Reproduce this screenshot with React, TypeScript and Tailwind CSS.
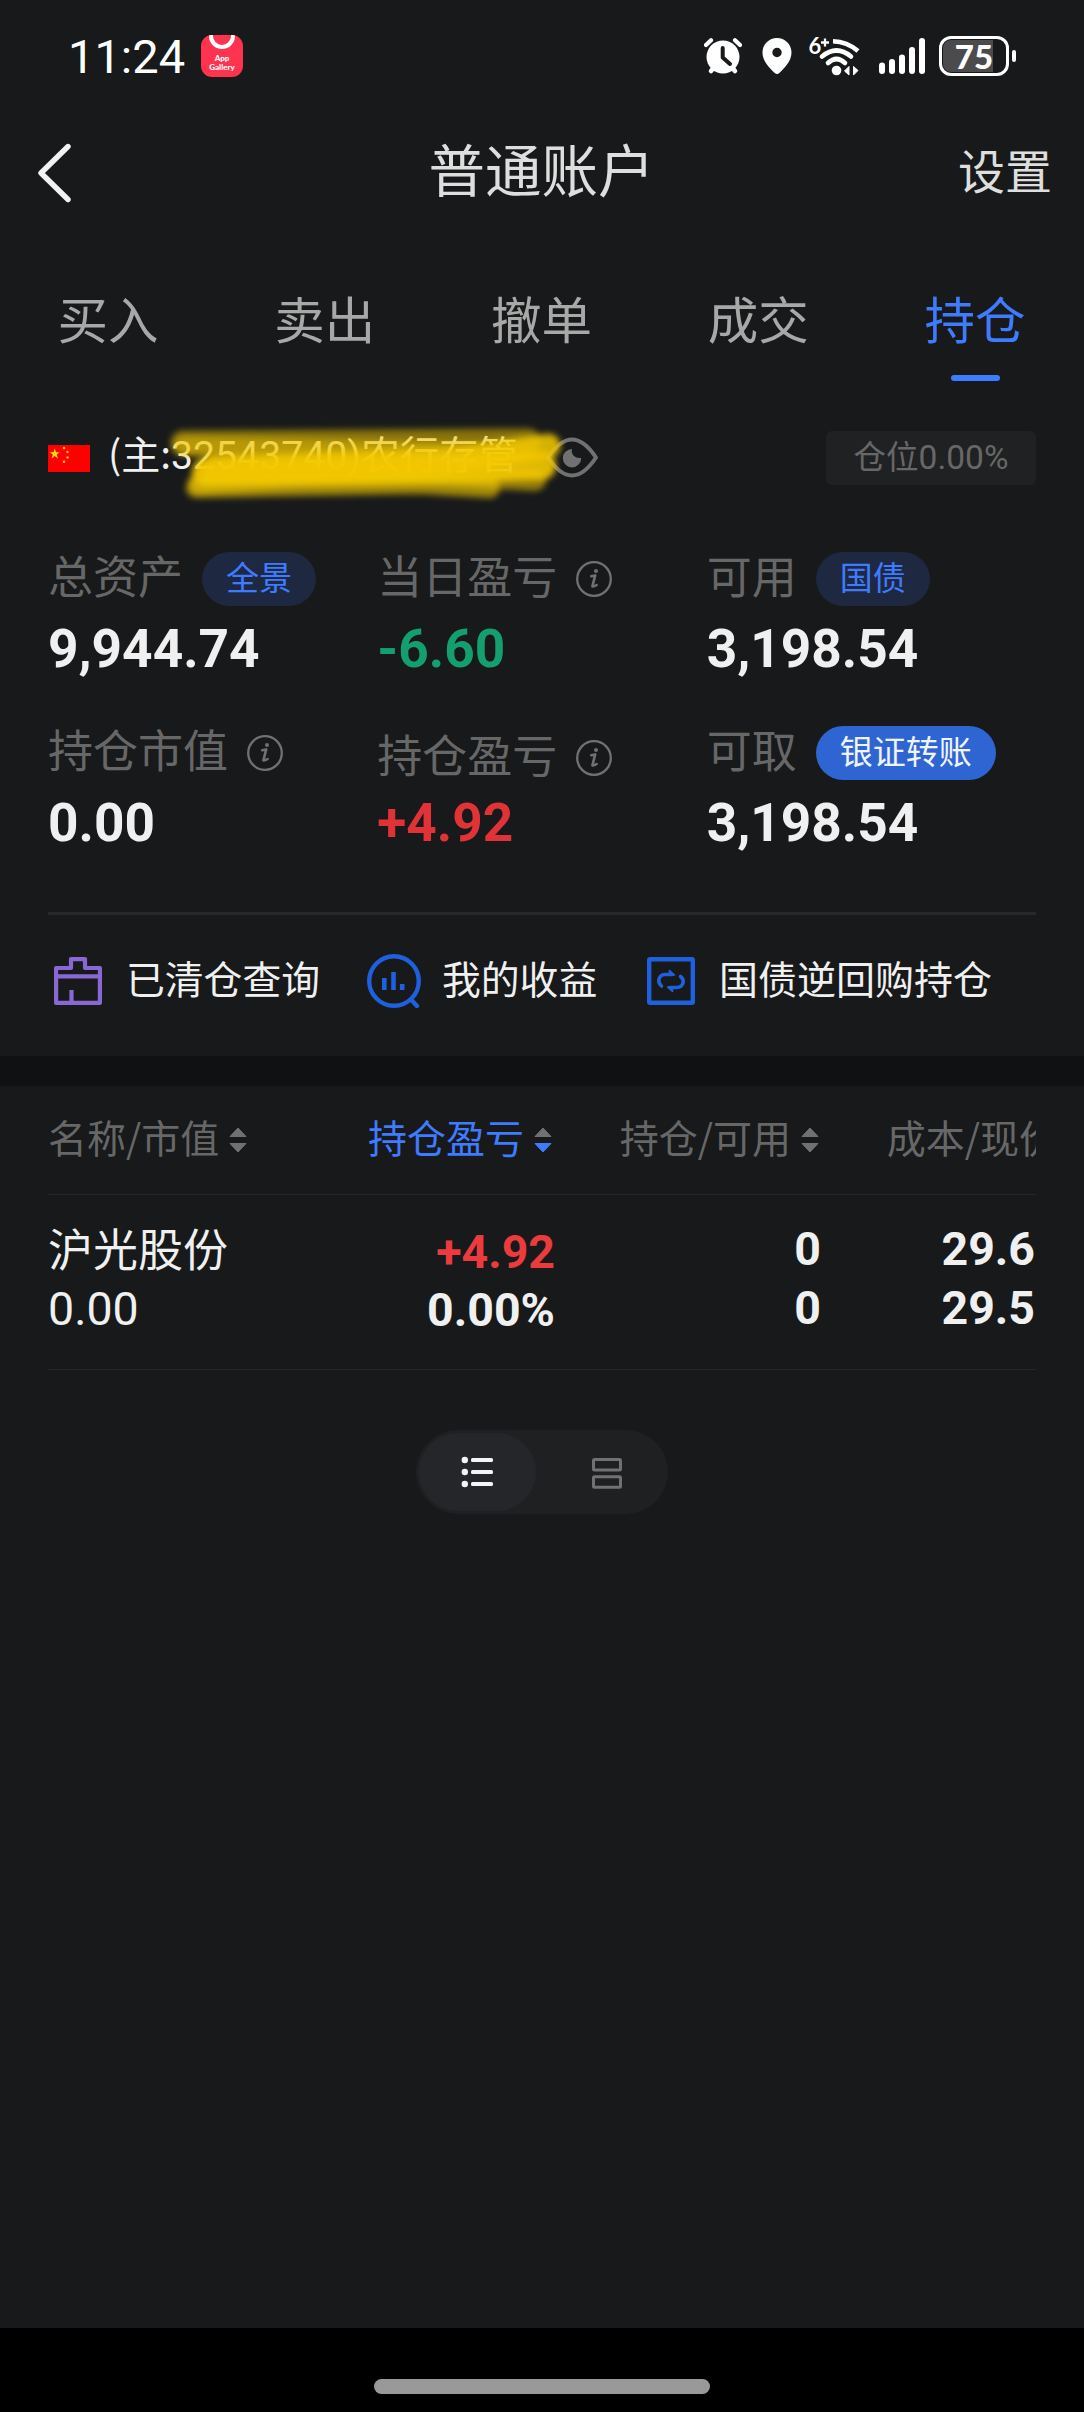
import * as React from 'react';

const NUM = 'font-[Roboto,sans-serif]';

interface SortArrowsProps {
  active?: boolean;
}

function SortArrows({ active }: SortArrowsProps) {
  return (
    <svg width="18" height="26" viewBox="0 0 18 26" className="ml-[10px] shrink-0">
      <path d="M9 1 L17 9.5 H1 Z" fill="#717171" stroke="#717171" strokeWidth="1" strokeLinejoin="round" />
      <path d="M9 25 L17 16.5 H1 Z" fill={active ? '#3f7bff' : '#717171'} stroke={active ? '#3f7bff' : '#717171'} strokeWidth="1" strokeLinejoin="round" />
    </svg>
  );
}

function InfoIcon() {
  return (
    <svg width="36" height="36" viewBox="0 0 36 36" fill="none" stroke="#717171" className="ml-[19px] shrink-0">
      <circle cx="18" cy="18" r="16.8" strokeWidth="2.3" />
      <circle cx="20" cy="10" r="2" fill="#717171" stroke="none" />
      <path d="M15.2 15.2 L19.2 14.4 L16.4 25.4 Q17.6 26 20.6 24" strokeWidth="2.6" strokeLinecap="round" strokeLinejoin="round" />
    </svg>
  );
}

function StatusBar() {
  return (
    <div className="flex h-28 items-center pl-[68px] pr-[68px]">
      <div className="w-[133px] text-[47px] leading-none text-white font-[Roboto,sans-serif]">11:24</div>
      <div className="relative flex h-[42px] w-[42px] flex-col items-center overflow-hidden rounded-[11px] bg-[#fd3350] pt-[19px] font-[Lato,sans-serif] text-[8px] font-black leading-[9px] text-white">
        <div className="absolute -top-[12px] left-[8px] h-[26px] w-[26px] rounded-full border-4 border-white"></div>
        <span>App</span>
        <span>Gallery</span>
      </div>
      <div className="ml-auto flex items-center">
        {/* Alarm */}
        <svg width="38" height="38" viewBox="0 0 38 38" fill="none">
          <path d="M7 34 L12 28 M31 34 L26 28" stroke="#fff" strokeWidth="4.5" strokeLinecap="round" />
          <circle cx="19" cy="20" r="16.5" fill="#fff" />
          <path d="M2 8 L7 3.2 M36 8 L31 3.2" stroke="#fff" strokeWidth="4.2" strokeLinecap="round" />
          <path d="M18.7 11 V20.5 L26 27" stroke="#17191a" strokeWidth="4" strokeLinecap="round" strokeLinejoin="round" />
        </svg>
        {/* Location */}
        <svg width="30" height="38" viewBox="0 0 30 38" className="ml-[20px]">
          <path fillRule="evenodd" fill="#fff" d="M15 1 C7 1 .5 7.3 .5 15.4 C.5 24 7 30 12.4 35.8 Q15 38.4 17.6 35.8 C23 30 29.5 24 29.5 15.4 C29.5 7.3 23 1 15 1 Z M15 10.8 A4.7 4.7 0 1 1 15 20.2 A4.7 4.7 0 1 1 15 10.8 Z" />
        </svg>
        {/* Wifi 6+ */}
        <svg width="52" height="42" viewBox="0 0 52 42" className="ml-[17px] overflow-visible" fill="none" stroke="#fff">
          <text x="-0.5" y="19" fill="#fff" stroke="none" fontFamily="Lato" fontWeight="700" fontSize="22">6</text>
          <path d="M12 7.5 H20 M16 3.5 V11.5" strokeWidth="2.3" />
          <path d="M24 6.2 Q38 6.5 49 16" strokeWidth="4.6" />
          <path d="M13 21.5 Q27.5 9.5 42 21.5" strokeWidth="4.6" strokeLinecap="round" />
          <path d="M19 28 Q27.5 20 36 28" strokeWidth="4.6" strokeLinecap="round" />
          <circle cx="27.5" cy="35.5" r="4.8" fill="#fff" stroke="none" />
          <path d="M40 31.5 V40 L35.5 36 Z" fill="#fff" strokeWidth="1" />
          <path d="M44.5 31.5 V40 L49 35.5 Z" fill="#fff" strokeWidth="1" />
        </svg>
        {/* Signal */}
        <svg width="46" height="38" viewBox="0 0 46 38" fill="#fff" className="ml-[18px]">
          <rect x="0" y="25.5" width="6" height="11.5" rx="3" />
          <rect x="10" y="22" width="6" height="15" rx="3" />
          <rect x="20" y="17.5" width="6" height="19.5" rx="3" />
          <rect x="30" y="10" width="6" height="27" rx="3" />
          <rect x="40" y="1" width="6" height="36" rx="3" />
        </svg>
        {/* Battery */}
        <div className="relative ml-[14px] h-10 w-[70px] rounded-[12px] border-[3px] border-white p-px">
          <div className="h-full w-[50px] rounded-l-[8px] bg-[#4b4b4d]"></div>
          <div className="absolute inset-0 flex items-center justify-center font-[Lato,sans-serif] text-[33px] font-black leading-none text-white">75</div>
        </div>
        <div className="ml-[3px] h-3 w-1 rounded-full bg-white"></div>
      </div>
    </div>
  );
}

function Header() {
  return (
    <div className="grid h-[110px] grid-cols-[300px_1fr_300px] items-center pl-[35px] pr-[32px]">
      <svg width="36" height="60" viewBox="0 0 36 60" fill="none" className="mt-[12px]">
        <path d="M33 3.5 L6 30 L33 56.5" stroke="#f2f2f2" strokeWidth="5.4" strokeLinecap="round" strokeLinejoin="round" />
      </svg>
      <div className="-ml-1 whitespace-nowrap text-center text-[56.5px] leading-none text-[#dedede]">普通账户</div>
      <div className="mt-0.5 text-right text-[47px] leading-none text-[#dedede]">设置</div>
    </div>
  );
}

const tabs = ['买入', '卖出', '撤单', '成交', '持仓'];

function Tabs() {
  return (
    <div className="grid grid-cols-5 pt-[70px] text-[50.5px] leading-[50px] text-[#a8a8a8]">
      {tabs.map((tab) => (
        <div key={tab} className={tab === '持仓' ? 'flex flex-col items-center text-[#3f7bff]' : 'flex flex-col items-center'}>
          <span className="mr-px">{tab}</span>
          <div className={tab === '持仓' ? 'mt-[33px] h-1.5 w-[49px] rounded-[3px] bg-[#3f7bff]' : 'mt-[33px] h-1.5'}></div>
        </div>
      ))}
    </div>
  );
}

function AccountRow() {
  return (
    <div className="relative mt-[50px] flex h-[54px] items-center">
      <svg width="42" height="27" viewBox="0 0 42 27">
        <rect width="42" height="27" fill="#fe0000" />
        <path fill="#ffe600" d="M6.8 3.6 L8 7.3 H11.8 L8.7 9.6 L9.9 13.4 L6.8 11.1 L3.6 13.4 L4.8 9.6 L1.7 7.3 H5.6 Z" />
        <circle cx="16" cy="3" r="1.3" fill="#ffc400" />
        <circle cx="19.5" cy="7" r="1.3" fill="#ffc400" />
        <circle cx="19.5" cy="12.5" r="1.3" fill="#ffc400" />
        <circle cx="16" cy="16.8" r="1.3" fill="#ffc400" />
      </svg>
      <div className="mb-[6px] ml-[18px] flex items-baseline whitespace-nowrap text-[39px] leading-none text-[#f0f0f0]">
        <span>(主:</span>
        <span className="font-[Roboto,'Noto_Sans_CJK_SC',sans-serif] text-[39.2px]">32543740)农行存管</span>
      </div>
      <svg width="54" height="42" viewBox="0 0 54 42" fill="none" className="absolute left-[497px] top-[6px]">
        <path d="M3 20.5 Q15 2.5 27 2.5 Q39 2.5 51 20.5 Q39 38.5 27 38.5 Q15 38.5 3 20.5 Z" stroke="#717171" strokeWidth="4" strokeLinejoin="round" />
        <path d="M27 12 A9.2 9.2 0 1 0 36.2 21 Q31 21.5 28.5 18.5 Q26 15.5 27 12 Z" fill="#717171" />
      </svg>
      {/* Highlighter scribble */}
      <svg width="430" height="100" viewBox="150 415 430 100" fill="none" stroke="#f4c900" strokeLinecap="round" strokeLinejoin="round" className="absolute left-[102px] -top-[16px]">
        <defs>
          <filter id="marker" filterUnits="userSpaceOnUse" x="150" y="415" width="430" height="100">
            <feGaussianBlur stdDeviation="3" />
          </filter>
        </defs>
        <g filter="url(#marker)">
          <path d="M183 443 L528 441" strokeWidth="25" opacity="0.5" />
          <path d="M184 446 L380 450 L505 453 L550 444" strokeWidth="20" opacity="0.45" />
          <path d="M214 468 L320 464 L450 460 L548 446" strokeWidth="25" opacity="0.75" />
          <path d="M206 472 L340 470 L470 468 L542 466" strokeWidth="28" opacity="0.9" />
          <path d="M199 483 L300 477 L440 475 L535 480" strokeWidth="22" opacity="0.55" />
          <path d="M196 488 L300 486 L420 484 L490 488" strokeWidth="20" opacity="0.6" />
        </g>
      </svg>
      <div className="ml-auto flex h-[54px] w-[210px] items-center justify-center rounded-md bg-[#202123] pb-[5px] text-[32.5px] leading-none text-[#676767]">
        仓位<span className="mt-1 font-[Roboto,sans-serif] text-[33.5px]">0.00%</span>
      </div>
    </div>
  );
}

interface StatProps {
  label: string;
  value: string;
  pill?: string;
  solid?: boolean;
  info?: boolean;
  low?: boolean;
  valueClass?: string;
}

function Stat({ label, value, pill, solid, info, low, valueClass = 'text-[#f0f0f0]' }: StatProps) {
  return (
    <div>
      <div className={low ? 'flex h-[54px] items-center pt-[10px]' : 'flex h-[54px] items-center'}>
        <div className="mb-[10px] whitespace-nowrap text-[45px] leading-none text-[#676767]">{label}</div>
        {pill && (
          <div
            className={
              solid
                ? 'ml-[19px] flex h-[54px] items-center rounded-full bg-[#2f65d2] px-6 pb-[5px] text-[33px] leading-none text-[#f0f4ff]'
                : 'ml-[19px] flex h-[54px] items-center rounded-full bg-[#1e2841] px-6 pb-[5px] text-[33px] leading-none text-[#3f7bff]'
            }
          >
            {pill}
          </div>
        )}
        {info && <InfoIcon />}
      </div>
      <div className={`${NUM} ${valueClass} mt-[17px] text-[53.2px] font-bold leading-[53px]`}>{value}</div>
    </div>
  );
}

function Shortcuts() {
  return (
    <div className="flex h-[141px] items-center pb-[9px] text-[38.8px] leading-none text-[#f0f0f0]">
      <svg width="48" height="48" viewBox="0 0 48 48" fill="none" stroke="#8a68d4" strokeWidth="4.2" className="ml-[6px] shrink-0">
        <path d="M2.1 11 H17 V2.1 H31 V11 H45.9 V45.9 H2.1 Z" strokeLinejoin="round" />
        <path d="M2 19.3 H46 M17.5 33 V46" />
      </svg>
      <div className="mb-2 ml-[24px] w-[195px] whitespace-nowrap">已清仓查询</div>
      <svg width="54" height="54" viewBox="0 0 54 54" fill="none" stroke="#1e60de" className="ml-[46px] shrink-0">
        <circle cx="27" cy="27" r="24.8" strokeWidth="4.4" />
        <path d="M44.5 46 L50 52" strokeWidth="4.4" strokeLinecap="round" />
        <path d="M17.3 24 V36 M26.5 18 V36 M35.2 30 V36" strokeWidth="4.6" />
      </svg>
      <div className="mb-2 ml-[21px] w-[156px] whitespace-nowrap">我的收益</div>
      <svg width="48" height="48" viewBox="0 0 48 48" fill="none" stroke="#1e60de" className="ml-[49px] shrink-0">
        <rect x="2.2" y="2.2" width="43.6" height="43.6" rx="1" strokeWidth="4.4" />
        <path d="M14.5 29 Q11 26 12 22 Q13.5 17.5 18 17.5 H25" strokeWidth="3.6" strokeLinecap="round" />
        <path d="M33.5 19.5 Q37 22 36 26 Q34.5 30.5 30 30.5 H23" strokeWidth="3.6" strokeLinecap="round" />
        <path d="M22.5 13.5 L27.5 18 H22.5 Z M25.5 34.5 L20.5 30 H25.5 Z" fill="#1e60de" strokeWidth="1.6" strokeLinejoin="round" />
      </svg>
      <div className="mb-2 ml-[24px] whitespace-nowrap text-[39px]">国债逆回购持仓</div>
    </div>
  );
}

const columns = [
  { title: '名称/市值', active: false },
  { title: '持仓盈亏', active: true },
  { title: '持仓/可用', active: false },
  { title: '成本/现价', active: false },
];

function Holdings() {
  return (
    <div className="mx-12 overflow-hidden">
      <div className="grid h-[108px] grid-cols-[240px_264px_267px_267px] items-center text-[39px] leading-none text-[#676767]">
        {columns.map((col, i) => (
          <div key={col.title} className={i === 0 ? 'flex items-center' : 'flex items-center justify-end'}>
            <span className={col.active ? 'mb-2 whitespace-nowrap text-[#3f7bff]' : 'mb-2 whitespace-nowrap'}>{col.title}</span>
            <SortArrows active={col.active} />
          </div>
        ))}
      </div>
      <div className="h-px bg-[#242628]"></div>
      <div className="grid h-[174px] grid-cols-[240px_267px_266px_215px] text-[46.5px] leading-[58px] text-[#f0f0f0]">
        <div className="pt-[24px]">
          <div className="whitespace-nowrap text-[45px]">沪光股份</div>
          <div className={`${NUM} mt-[3px]`}>0.00</div>
        </div>
        <div className={`${NUM} pt-[28px] text-right font-bold`}>
          <div className="text-[#ec3b3f]">+4.92</div>
          <div>0.00%</div>
        </div>
        <div className={`${NUM} pt-[25px] text-right font-bold leading-[59px]`}>
          <div>0</div>
          <div>0</div>
        </div>
        <div className={`${NUM} pr-px pt-[25px] text-right font-bold leading-[59px]`}>
          <div>29.6</div>
          <div>29.5</div>
        </div>
      </div>
      <div className="h-px bg-[#242628]"></div>
    </div>
  );
}

function ViewToggle() {
  return (
    <div className="mx-auto mt-[60px] flex h-[84px] w-[252px] items-center rounded-full bg-[#1f2021] p-[3px]">
      <div className="flex h-[78px] w-[117px] items-center justify-center rounded-full bg-[#25262a] pr-[2px]">
        <svg width="32" height="32" viewBox="0 0 32 32" fill="#f4f4f4">
          <circle cx="3.8" cy="4" r="3.2" />
          <circle cx="3.8" cy="16" r="3.2" />
          <circle cx="3.8" cy="28" r="3.2" />
          <rect x="10" y="2" width="22" height="4" rx="1.5" />
          <rect x="10" y="14" width="22" height="4" rx="1.5" />
          <rect x="10" y="26" width="22" height="4" rx="1.5" />
        </svg>
      </div>
      <svg width="30" height="32" viewBox="0 0 30 32" fill="none" stroke="#717171" strokeWidth="3" className="ml-[56px] mt-[3px]">
        <rect x="1.5" y="1.5" width="27" height="10.5" rx="1" />
        <rect x="1.5" y="18.8" width="27" height="10.5" rx="1" />
      </svg>
    </div>
  );
}

export default function App(): React.ReactElement {
  return (
    <div className="flex h-[2412px] w-[1084px] flex-col overflow-hidden bg-[#17191a] font-['Noto_Sans_CJK_SC',sans-serif]">
      <StatusBar />
      <Header />
      <Tabs />
      <div className="mx-12">
        <AccountRow />
        <div className="mt-[67px] grid grid-cols-3 gap-y-[50px]">
          <Stat label="总资产" value="9,944.74" pill="全景" />
          <Stat label="当日盈亏" value="-6.60" info valueClass="text-[#14a06e]" />
          <Stat label="可用" value="3,198.54" pill="国债" />
          <Stat label="持仓市值" value="0.00" info />
          <Stat label="持仓盈亏" value="+4.92" info low valueClass="text-[#e13238]" />
          <Stat label="可取" value="3,198.54" pill="银证转账" solid />
        </div>
        <div className="mt-[62px] h-[3px] bg-[#26282a]"></div>
        <Shortcuts />
      </div>
      <div className="h-[30px] shrink-0 bg-[#101113]"></div>
      <Holdings />
      <ViewToggle />
      {/* Gesture bar */}
      <div className="mt-auto flex h-[84px] justify-center bg-black pt-[51px]">
        <div className="h-[15px] w-[336px] rounded-full bg-[#999999]"></div>
      </div>
    </div>
  );
}
